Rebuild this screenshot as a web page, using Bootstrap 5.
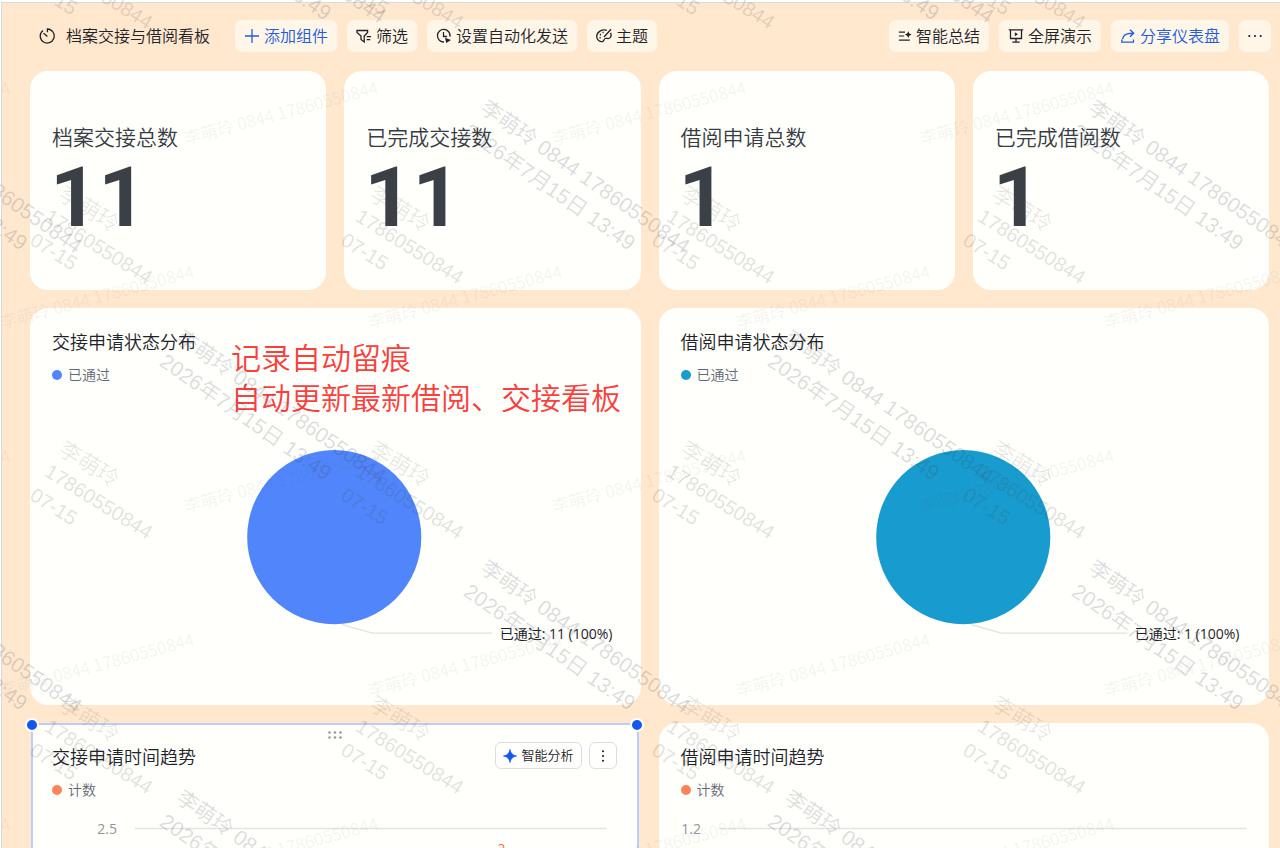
<!DOCTYPE html>
<html lang="zh-CN">
<head>
<meta charset="utf-8">
<meta name="viewport" content="width=device-width, initial-scale=1">
<title>档案交接与借阅看板</title>
<link rel="stylesheet" href="https://cdn.jsdelivr.net/npm/bootstrap@5.3.0/dist/css/bootstrap.min.css">
<style>
  body { font-family: "Open Sans", "Noto Sans CJK SC", sans-serif; font-weight: 350; color: #1f2329; background: #fff; }
  .board { background: #ffe8ce; border-left: 1px solid #d9dadb; border-top: 1px solid #d9dadb; margin-left: 1px; margin-top: 2px; height: calc(100vh - 2px); padding: 0 11px 0 28px; }
  .toolbar { gap: 10px; padding: 17px 0 19px 9px; margin-right: -2px; }
  .board-name { font-size: 16px; line-height: 32px; font-weight: inherit; gap: 11px; margin-right: 15px; }
  .tool { --bs-btn-padding-x: 9px; --bs-btn-padding-y: 0; --bs-btn-font-size: 16px; --bs-btn-font-weight: 350; --bs-btn-line-height: 32px; --bs-btn-border-width: 0; --bs-btn-border-radius: 7px; --bs-btn-color: #1f2329; --bs-btn-bg: #fff6e8; --bs-btn-hover-bg: #fffaf2; gap: 4px; height: 32px; white-space: nowrap; }
  .tool-blue { --bs-btn-color: #245bdb; --bs-btn-hover-color: #245bdb; }
  svg.ico { width: 16px; height: 16px; fill: none; stroke: currentColor; stroke-width: 1.3; flex: none; }
  svg.ico-sm { width: 14px; height: 14px; }
  .widgets { --bs-gutter-x: 18px; --bs-gutter-y: 18px; }
  .panel { background: #fffffc; border-radius: 18px; position: relative; height: 100%; }
  .stat { padding: 51px 22px 50px; }
  .stat-label { font-size: 21px; line-height: 30px; color: #373c43; font-weight: inherit; margin: 0 0 4px; }
  .stat-value { font-family: Roboto, sans-serif; font-size: 84px; line-height: 84px; font-weight: 700; color: #3a4045; margin: 0 0 0 -2px; }
  .panel-title { font-size: 18px; line-height: 29px; font-weight: inherit; margin: 0; }
  .panel-head { padding: 20px 22px 0; }
  .legend-item { font-size: 14px; line-height: 20px; color: #646a73; gap: 6px; padding: 8px 22px 0; }
  .legend-item i { width: 10px; height: 10px; border-radius: 50%; background: currentColor; flex: none; }
  .k-blue i { color: #5085fb; } .k-cyan i { color: #189bce; } .k-orange i { color: #fc8558; }
  .plot { display: block; width: 100%; font-size: 14px; font-weight: 400; }
  .selected { border-radius: 0; box-shadow: inset 0 0 0 2px #bccdfd; margin: 0 2px 0 1px; }
  .selected .panel-head, .selected .legend-item { padding-left: 21px; }
  .handle { position: absolute; width: 14px; height: 14px; border-radius: 50%; border: 2px solid #fff; background: #1456f0; top: -5px; }
  .handle-l { left: -6px; } .handle-r { right: -5px; }
  .grip { position: absolute; top: 8px; left: 50%; margin-left: -7px; width: 14px; height: 8px; fill: #8f959e; }
  .actions { position: absolute; top: 19px; right: 22px; gap: 7px; }
  .mini { --bs-btn-padding-x: 7px; --bs-btn-padding-y: 0; --bs-btn-font-size: 13px; --bs-btn-font-weight: 350; --bs-btn-line-height: 25px; --bs-btn-border-color: #dcdee1; --bs-btn-border-radius: 6px; --bs-btn-color: #1f2329; --bs-btn-bg: #fffffd; gap: 4px; height: 27px; }
  .mini-dots { --bs-btn-padding-x: 6px; }
  .note { position: absolute; left: 201px; top: 30px; margin: 0; font-size: 30px; line-height: 40px; color: #f9403d; white-space: nowrap; }
  .watermark { position: absolute; inset: 0; width: 100%; height: 100%; pointer-events: none; z-index: 5; }
  .wm-dark { font: 350 21px "Liberation Sans", "Noto Sans CJK SC", sans-serif; fill: rgba(60,65,85,.19); }
  .wm-mid { font: 300 20px "Liberation Sans", "Noto Sans CJK SC", sans-serif; fill: rgba(70,70,70,.17); }
  .wm-name { font-size: 22px; }
  .wm-pale { font: 400 17px "Noto Sans CJK SC", sans-serif; fill: rgba(90,90,90,.075); }
</style>
</head>
<body class="position-relative vh-100 overflow-hidden">
<main class="board overflow-hidden">
  <header class="toolbar d-flex align-items-center">
    <h1 class="board-name d-flex align-items-center mb-0">
      <svg class="ico" viewBox="0 0 16 16"><path d="M4 2.400A7 7 0 1 0 8.400 1V4.200M4.600 5.200 8.400 8.600"/></svg>档案交接与借阅看板</h1>
    <button type="button" class="btn tool tool-blue d-flex align-items-center"><svg class="ico" viewBox="0 0 16 16"><path d="M8 1v14M1 8h14"/></svg>添加组件</button>
    <button type="button" class="btn tool d-flex align-items-center"><svg class="ico" viewBox="0 0 16 16"><path d="M1 2.500h10.600v2L8.200 8v6L5 11.500V8L1 4.500zM10.600 8.700H15M10.600 11.700h3.600"/></svg>筛选</button>
    <button type="button" class="btn tool d-flex align-items-center"><svg class="ico" viewBox="0 0 16 16"><path d="M14 8.600A6.300 6.300 0 1 0 8 14M7.500 4v4.500h3.600"/><path d="M9 9.700l6 2.200-4.800 3z" fill="currentColor" stroke="none"/></svg>设置自动化发送</button>
    <button type="button" class="btn tool d-flex align-items-center"><svg class="ico" viewBox="0 0 16 16"><path d="M10.800 2.300C6 .6.700 4 .700 8.500c0 3.300 3 5.500 6 5 1.500-.3 1-2.500 2.500-3 1.600-.6 3.500 1 5-.8 1.200-1.500 1-3.500.3-4.800M15 1.300 8 9"/><path d="M3.500 9.800h1.200M3.800 6.600H5M6.500 4.500h1.200" stroke-width="1.600"/></svg>主题</button>
    <button type="button" class="btn tool d-flex align-items-center ms-auto"><svg class="ico ico-sm" viewBox="0 0 16 16"><path d="M1 3.500h7M1 8h6M1 12.700h12.500"/><path d="M11.700 2.500l1.200 2.700 2.700 1.200-2.700 1.200-1.200 2.700-1.200-2.700-2.700-1.200 2.700-1.200z" fill="currentColor" stroke="none"/></svg>智能总结</button>
    <button type="button" class="btn tool d-flex align-items-center"><svg class="ico" viewBox="0 0 16 16"><path d="M.8 1.800h14.400M2.500 1.800v8.700h11V1.800M8 10.500v3.700M4.300 14.200h7.400"/><path d="M6.800 4.200v4l3.200-2z" fill="currentColor" stroke="none"/></svg>全屏演示</button>
    <button type="button" class="btn tool tool-blue d-flex align-items-center"><svg class="ico" viewBox="0 0 16 16"><path d="M10 1.800 13.700 5.300 10 8.800M13.500 5.300C7 5 3 7 2.500 11.200M1.800 11.500v2.700h11.700v-2.700"/></svg>分享仪表盘</button>
    <button type="button" class="btn tool d-flex align-items-center px-2" aria-label="更多"><svg class="ico" viewBox="0 0 16 16"><g fill="currentColor" stroke="none"><circle cx="2.300" cy="8" r="1.100"/><circle cx="8" cy="8" r="1.100"/><circle cx="13.700" cy="8" r="1.100"/></g></svg></button>
  </header>

  <div class="row widgets">
    <div class="col-3"><section class="panel stat"><h2 class="stat-label">档案交接总数</h2><p class="stat-value">11</p></section></div>
    <div class="col-3"><section class="panel stat"><h2 class="stat-label">已完成交接数</h2><p class="stat-value">11</p></section></div>
    <div class="col-3"><section class="panel stat"><h2 class="stat-label">借阅申请总数</h2><p class="stat-value">1</p></section></div>
    <div class="col-3"><section class="panel stat"><h2 class="stat-label">已完成借阅数</h2><p class="stat-value">1</p></section></div>

    <div class="col-6"><section class="panel">
      <div class="panel-head"><h2 class="panel-title">交接申请状态分布</h2></div>
      <div class="legend-item k-blue d-flex align-items-center"><i></i>已通过</div>
      <svg class="plot" viewBox="0 0 610 320"><circle cx="304" cy="152" r="87" fill="#5085fb"/><path d="M312 239.500 342 248H462" fill="none" stroke="#e0e3e0" stroke-width="1.300"/><text x="582" y="254" text-anchor="end" fill="#1f2329">已通过: 11 (100%)</text></svg>
      <p class="note">记录自动留痕<br>自动更新最新借阅、交接看板</p>
    </section></div>
    <div class="col-6"><section class="panel">
      <div class="panel-head"><h2 class="panel-title">借阅申请状态分布</h2></div>
      <div class="legend-item k-cyan d-flex align-items-center"><i></i>已通过</div>
      <svg class="plot" viewBox="0 0 610 320"><circle cx="304" cy="152" r="87" fill="#189bce"/><path d="M312 239.500 342 248H468" fill="none" stroke="#e0e3e0" stroke-width="1.300"/><text x="580" y="254" text-anchor="end" fill="#1f2329">已通过: 1 (100%)</text></svg>
    </section></div>

    <div class="col-6"><section class="panel selected">
      <span class="handle handle-l"></span><span class="handle handle-r"></span>
      <svg class="grip" viewBox="0 0 14 8"><circle cx="1.500" cy="1.500" r="1.200"/><circle cx="7" cy="1.500" r="1.200"/><circle cx="12.500" cy="1.500" r="1.200"/><circle cx="1.500" cy="6.500" r="1.200"/><circle cx="7" cy="6.500" r="1.200"/><circle cx="12.500" cy="6.500" r="1.200"/></svg>
      <div class="actions d-flex">
        <button type="button" class="btn mini d-flex align-items-center"><svg class="ico ico-sm" viewBox="0 0 16 16"><path d="M8 .500Q9 7 15.500 8 9 9 8 15.500 7 9 .500 8 7 7 8 .500z" fill="#1456f0" stroke="#1456f0" stroke-width=".8"/></svg>智能分析</button>
        <button type="button" class="btn mini mini-dots d-flex align-items-center" aria-label="更多操作"><svg class="ico ico-sm" viewBox="0 0 16 16"><g fill="currentColor" stroke="none"><circle cx="8" cy="2.500" r="1.200"/><circle cx="8" cy="8" r="1.200"/><circle cx="8" cy="13.500" r="1.200"/></g></svg></button>
      </div>
      <div class="panel-head"><h2 class="panel-title">交接申请时间趋势</h2></div>
      <div class="legend-item k-orange d-flex align-items-center"><i></i>计数</div>
      <svg class="plot" viewBox="0 0 608 240"><path d="M104 28.500H576" stroke="#e2e4e2" stroke-width="1.300"/><text x="86" y="34" text-anchor="end" fill="#8f959e">2.5</text><text x="471" y="54" text-anchor="middle" fill="#f0703f">2</text></svg>
    </section></div>
    <div class="col-6"><section class="panel">
      <div class="panel-head"><h2 class="panel-title">借阅申请时间趋势</h2></div>
      <div class="legend-item k-orange d-flex align-items-center"><i></i>计数</div>
      <svg class="plot" viewBox="0 0 610 240"><path d="M60 28.500H587" stroke="#e2e4e2" stroke-width="1.300"/><text x="42" y="34" text-anchor="end" fill="#8f959e">1.2</text></svg>
    </section></div>
  </div>
</main>
<svg class="watermark" id="watermark" aria-hidden="true"></svg>
<script>
  // Repeats each watermark stamp on its own grid: every grid is [x, y] of its first stamp.
  const stamps = [
    { cls: 'wm-dark', angle: 35, step: [608, 460], grids: [[-129, 111], [175, -119]],
      lines: [['李萌玲 0844 17860550844', 0], ['2026年7月15日 13:49', 29]] },
    { cls: 'wm-mid', angle: 32, step: [311, 255], grids: [[-254, -57]],
      lines: [['李萌玲', 0, 'wm-name'], ['17860550844', 26], ['07-15', 54]] },
    { cls: 'wm-pale', angle: -15, step: [368, 368], grids: [[-182, 145], [2, 329]],
      lines: [['李萌玲 0844 17860550844', 0]] }
  ];
  const layer = document.getElementById('watermark');
  let out = '';
  for (const s of stamps)
    for (const [gx, gy] of s.grids)
      for (let y = gy; y < innerHeight + 60; y += s.step[1])
        for (let x = gx; x < innerWidth; x += s.step[0])
          out += `<g class="${s.cls}" transform="translate(${x} ${y}) rotate(${s.angle})">` +
            s.lines.map(([t, dy, c]) => `<text y="${dy}" class="${c || ''}">${t}</text>`).join('') + '</g>';
  layer.innerHTML = out;
</script>
<script src="https://cdn.jsdelivr.net/npm/bootstrap@5.3.0/dist/js/bootstrap.bundle.min.js"></script>
</body>
</html>
